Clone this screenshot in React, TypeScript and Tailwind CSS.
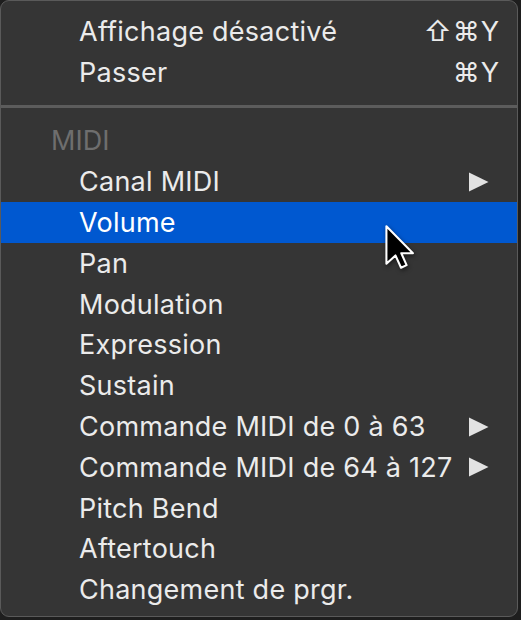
import React from "react";

type Item = { label: string; shortcut?: string; submenu?: boolean; active?: boolean };

const top: Item[] = [
  { label: "Affichage désactivé", shortcut: "⇧⌘Y" },
  { label: "Passer", shortcut: "⌘Y" },
];

const midi: Item[] = [
  { label: "Canal MIDI", submenu: true },
  { label: "Volume", active: true },
  { label: "Pan" },
  { label: "Modulation" },
  { label: "Expression" },
  { label: "Sustain" },
  { label: "Commande MIDI de 0 à 63", submenu: true },
  { label: "Commande MIDI de 64 à 127", submenu: true },
  { label: "Pitch Bend" },
  { label: "Aftertouch" },
  { label: "Changement de prgr." },
];

function Arrow() {
  return (
    <svg width="21" height="20" viewBox="0 0 21 20" className="shrink-0">
      <path d="M1 0.5 L20.5 10 L1 19.5 Z" fill="#e2e2e2" />
    </svg>
  );
}

function Cursor() {
  return (
    <svg
      width="30"
      height="44"
      viewBox="-1 -1 23 34"
      className="absolute left-[384px] top-[224px] drop-shadow-[1px_2px_2px_rgba(0,0,0,0.5)]"
    >
      <path
        d="M0 0 L0 29 L7 22.5 L11.3 32 L15.6 30 L11.5 20.8 L20.5 20.8 Z"
        fill="#000"
        stroke="#fff"
        strokeWidth="1.6"
        strokeLinejoin="round"
      />
    </svg>
  );
}

function Row({ item }: { item: Item }) {
  return (
    <div
      className={`flex h-[40.8px] items-center pl-[78px] pr-[17px] ${
        item.active ? "bg-[#0058d0] text-white" : "text-[#ebebeb]"
      }`}
    >
      <span className="flex-1 whitespace-nowrap tracking-[0.25px]">{item.label}</span>
      {item.shortcut && <span className="tracking-[1px]">{item.shortcut}</span>}
      {item.submenu && (
        <span className="pr-[11px]">
          <Arrow />
        </span>
      )}
    </div>
  );
}

export default function App() {
  return (
    <div className="h-[620px] w-[521px] bg-[#1e1e1e]">
      <div
        className="relative flex h-[617px] w-[518px] flex-col overflow-hidden rounded-[9px] border border-[#5a5a5a] bg-[#353535] pt-[10px] text-[27px] leading-none"
        style={{ fontFamily: "Inter, 'DejaVu Sans', sans-serif" }}
      >
        {top.map((i) => (
          <Row key={i.label} item={i} />
        ))}
        <div className="flex h-[28px] items-center">
          <div className="h-[3px] w-full bg-[#5c5c5c]" />
        </div>
        <div className="flex h-[40.8px] items-center pl-[50px] text-[#6e6e6e]">MIDI</div>
        {midi.map((i) => (
          <Row key={i.label} item={i} />
        ))}
        <Cursor />
      </div>
    </div>
  );
}
